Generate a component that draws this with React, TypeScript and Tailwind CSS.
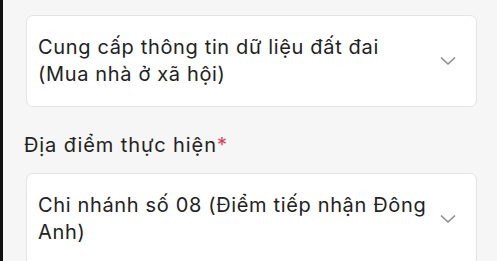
import React from "react";

function Chevron() {
  return (
    <svg width="16" height="16" viewBox="0 0 16 16" fill="none" className="shrink-0">
      <path d="M1.5 5 L8 11 L14.5 5" stroke="#8d8d8d" strokeWidth="1.7" strokeLinecap="round" strokeLinejoin="round" />
    </svg>
  );
}

function Select({ text }: { text: string }) {
  return (
    <div className="flex items-center h-[92px] rounded-[7px] border border-[#e4e4e4] bg-white pl-[11px] pr-[20px]">
      <div className="flex-1 text-[20px] leading-[27px] tracking-[0.65px] text-[#222222] pr-[8px]">{text}</div>
      <Chevron />
    </div>
  );
}

function Label({ text }: { text: string }) {
  return (
    <div className="text-[20px] leading-[24px] tracking-[0.9px] text-[#222222]">
      {text}
      <span className="text-[#dc3f5b]">*</span>
    </div>
  );
}

export default function App() {
  return (
    <div className="flex w-[497px] h-[261px] overflow-hidden bg-[#f6f6f6]" style={{ fontFamily: "Inter, 'Noto Sans', sans-serif" }}>
      <div className="w-[3px] shrink-0 bg-[#111111]" />
      <div className="flex-1 pl-[21px] pr-[20px]">
        <div className="mt-[-25px] pl-[1px]">
          <Label text="Lĩnh vực thực hiện" />
        </div>
        <div className="mt-[16px] ml-[2px]">
          <Select text="Cung cấp thông tin dữ liệu đất đai (Mua nhà ở xã hội)" />
        </div>
        <div className="mt-[26px]">
          <Label text="Địa điểm thực hiện" />
        </div>
        <div className="mt-[16px] ml-[2px]">
          <Select text="Chi nhánh số 08 (Điểm tiếp nhận Đông Anh)" />
        </div>
      </div>
    </div>
  );
}
